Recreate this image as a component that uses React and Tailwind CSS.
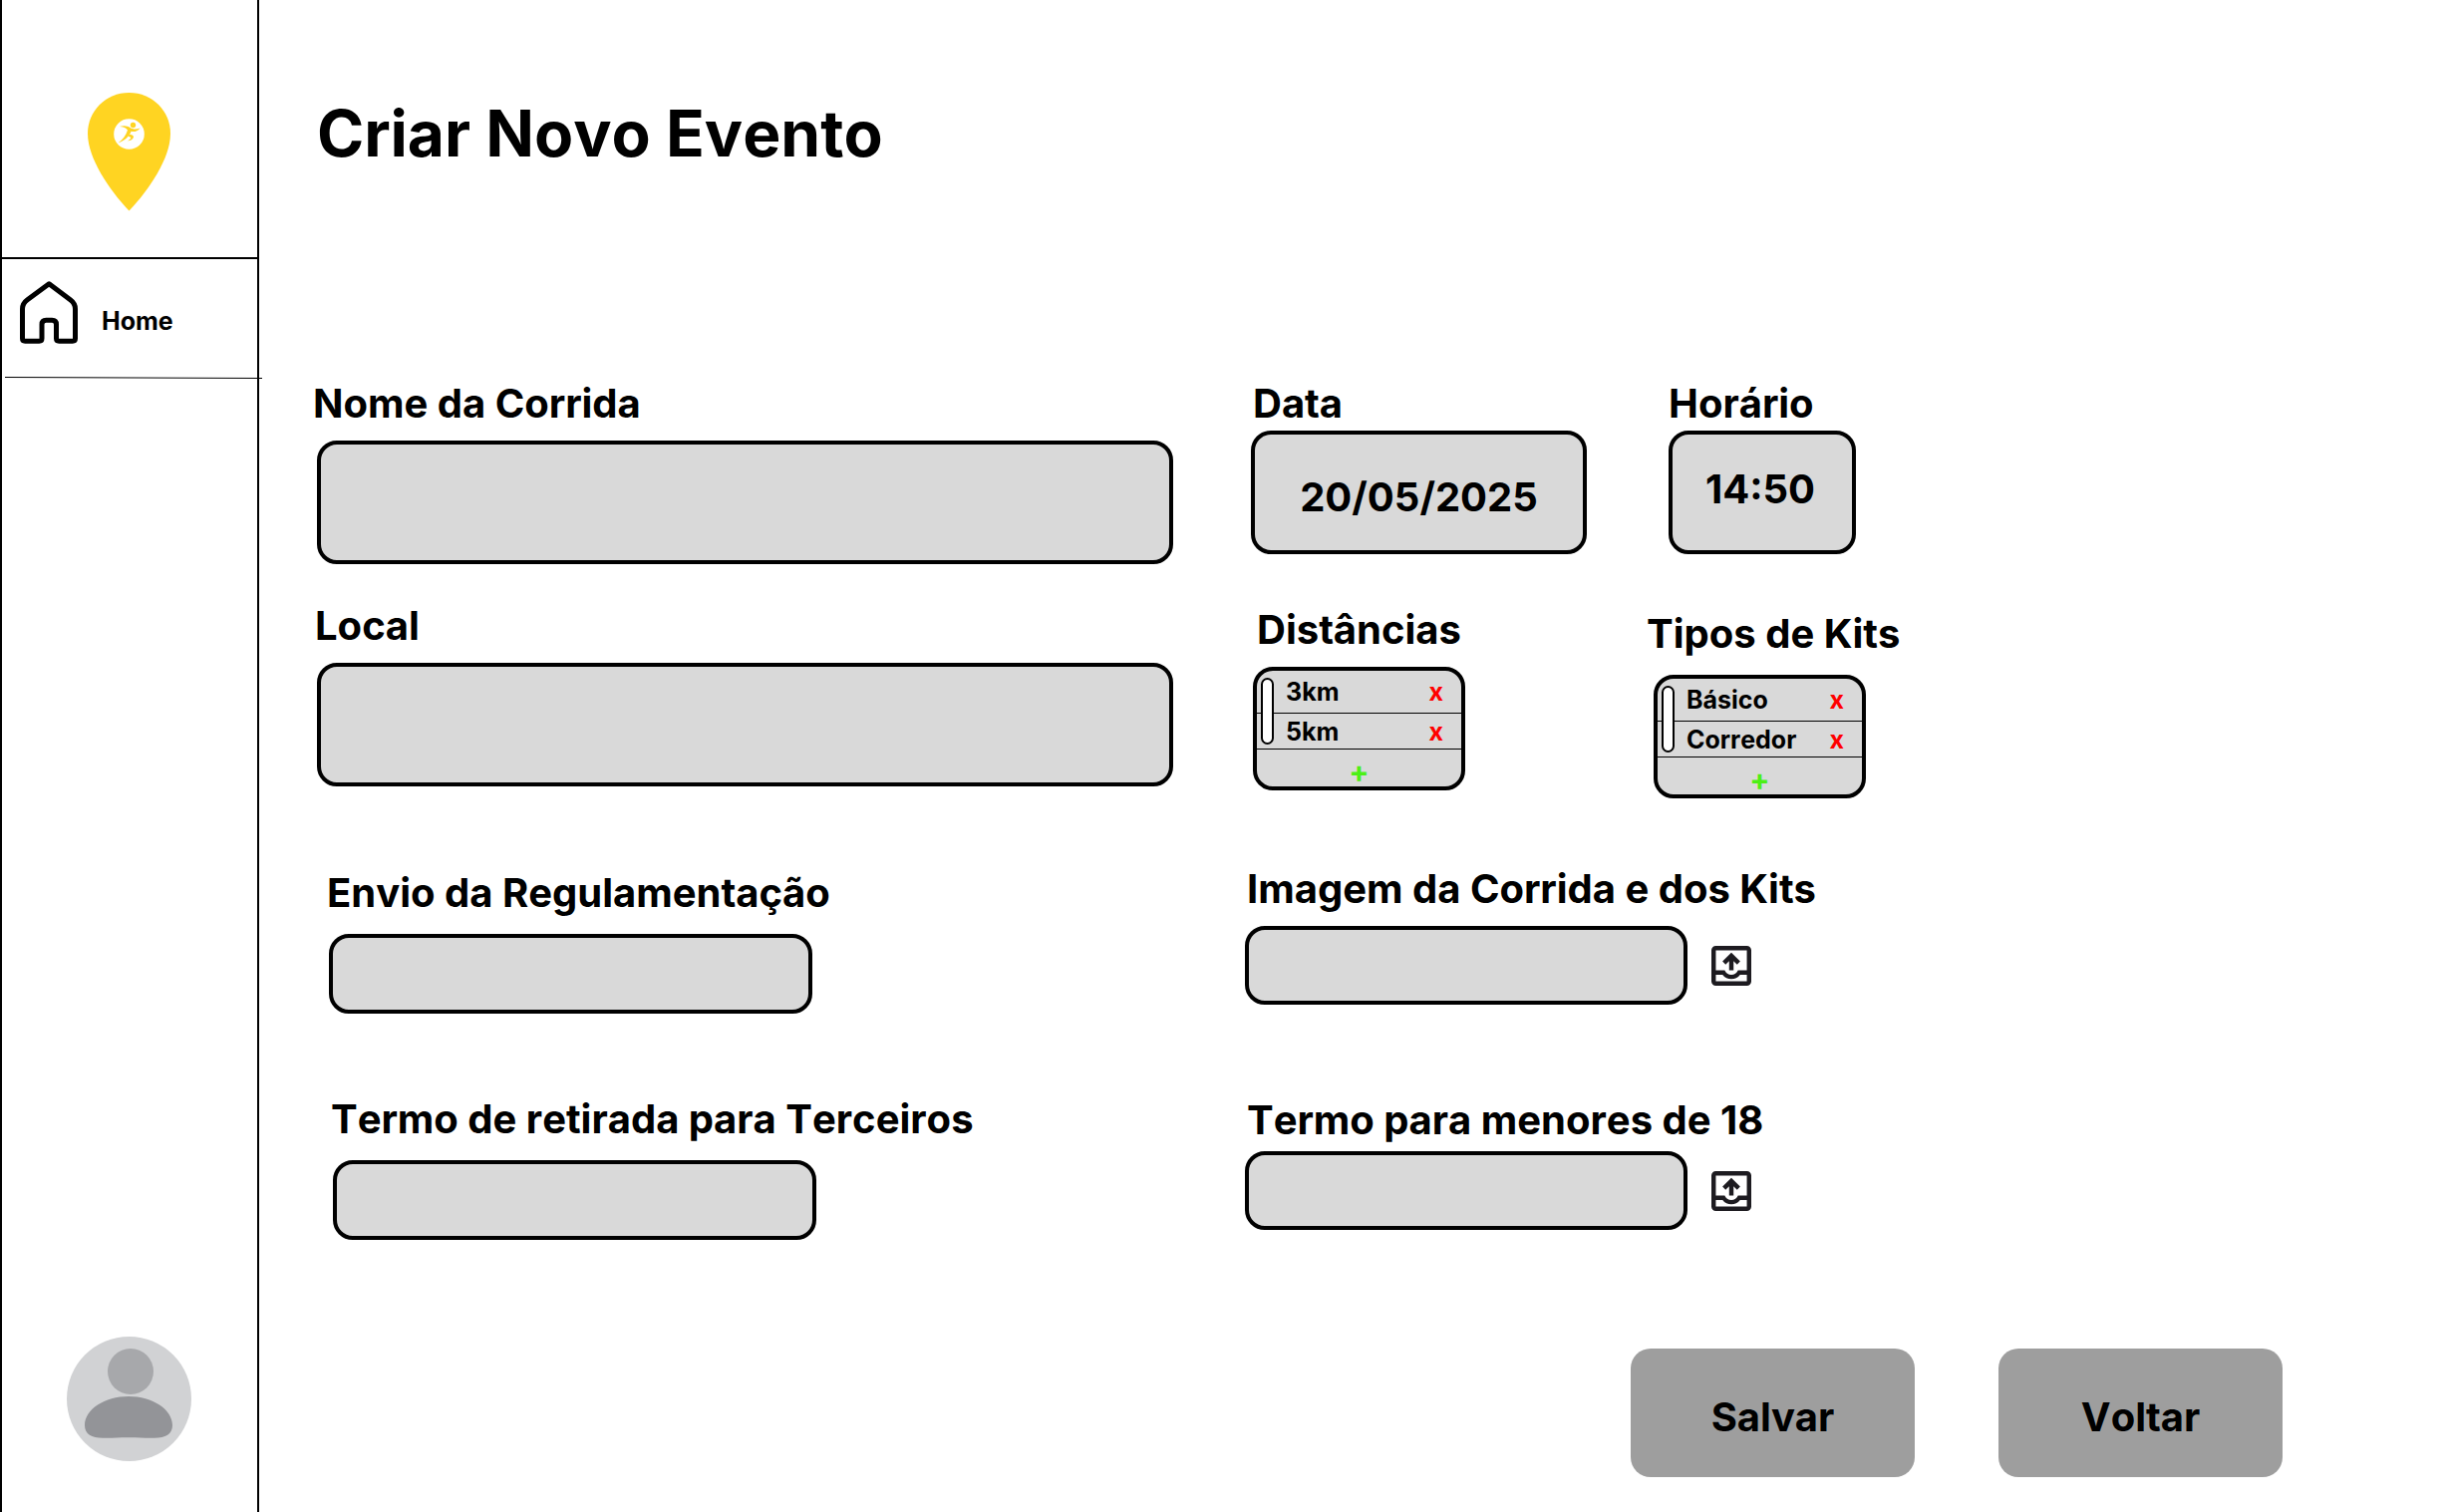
const LABEL = "block text-[40px] leading-[50px] font-bold whitespace-nowrap";
const BOX = "block border-4 border-black bg-[#d9d9d9] rounded-[20px]";

function Pin() {
  return (
    <svg viewBox="0 0 84 119" className="w-[84px] h-[119px]" aria-label="Logo" role="img">
      <path
        d="M41.500 0C18 0 0 18.500 0 41C0 66 22 98 41.500 118.500C61 98 83 66 83 41C83 18.500 65 0 41.500 0Z"
        fill="#ffd422"
      />
      <circle cx="41.500" cy="41.500" r="15.300" fill="#fff" />
      <g fill="#ffd422">
        <circle cx="45.500" cy="32.500" r="2.700" />
        <path d="M32 34C36 32.500 40 33.200 42.500 35C45 36.800 49 37 52.500 35.500C50 39 46.500 39.500 43.500 38.800C42.500 43 37 48.500 30.500 50.500C35 47 38.500 43 40 37.500C38 34.500 35 34 32 34Z" />
        <path d="M40.500 42.500C43 41 46 42.500 46 44.500C45.500 47 42.500 48.500 40 48.300C42 47 43.500 46 43.300 45C42.500 44.300 41 44.500 40.500 42.500Z" />
      </g>
    </svg>
  );
}

function HomeIcon() {
  return (
    <svg viewBox="0 0 58 63" className="w-[58px] h-[63px]" fill="none" stroke="#000" strokeWidth="5" aria-hidden="true">
      <path
        d="M29.200 2.800L50.500 18.800Q55.500 22.500 55.500 28V57.500Q55.500 60.200 52.800 60.200H39.200Q36.500 60.200 36.500 57.500V43.500Q36.500 39.200 32.200 39.200H26.300Q22 39.200 22 43.500V57.500Q22 60.200 19.300 60.200H5.200Q2.500 60.200 2.500 57.500V28Q2.500 22.500 7.500 18.800Z"
        strokeLinejoin="round"
      />
    </svg>
  );
}

function Avatar() {
  return (
    <svg viewBox="0 0 125 125" className="w-[125px] h-[125px]" role="img" aria-label="Perfil">
      <circle cx="62.500" cy="62.500" r="62.500" fill="#d1d2d4" />
      <circle cx="64" cy="35" r="23" fill="#a7a8ab" />
      <path
        d="M62 60C86 60 106 73 106 89C106 98 99 101.500 88 101.700C79 102 71 101.200 62 101.300C53 101.200 45 102 36 101.700C25 101.500 18 98 18 89C18 73 38 60 62 60Z"
        fill="#939498"
      />
    </svg>
  );
}

function UploadIcon() {
  return (
    <svg viewBox="3 3 18 18" className="w-10 h-10" fill="#1d1b20" aria-hidden="true">
      <path
        fillRule="evenodd"
        d="M5 3H19A2 2 0 0 1 21 5V19A2 2 0 0 1 19 21H5A2 2 0 0 1 3 19V5A2 2 0 0 1 5 3ZM5 16V19H19V16H15.950Q15.200 17 14.200 17.500T12 18T9.800 17.500T8.050 16ZM5 14H9Q9.300 14.900 10.150 15.450T12 16T13.850 15.450T15 14H19V5H5Z"
      />
      <path d="M11 14V9.850L9.400 11.400L8 10L12 6L16 10L14.600 11.400L13 9.850V14Z" />
    </svg>
  );
}

function Field({ id, label, className, labelGap, boxClass, ...rest }) {
  return (
    <div className={className}>
      <label htmlFor={id} className={`${LABEL} ${labelGap}`}>{label}</label>
      <input id={id} type="text" className={`${BOX} ${boxClass}`} {...rest} />
    </div>
  );
}

function UploadField({ id, label, labelGap }) {
  return (
    <div>
      <label htmlFor={id} className={`${LABEL} pl-0.5 ${labelGap}`}>{label}</label>
      <div className="flex items-center gap-6">
        <input id={id} type="text" className={`${BOX} h-[79px] w-[444px]`} />
        <button type="button" aria-label={`Enviar: ${label}`}><UploadIcon /></button>
      </div>
    </div>
  );
}

function ListBox({ label, items, className, labelClass, boxClass }) {
  return (
    <div className={className}>
      <h2 className={`${LABEL} ${labelClass}`}>{label}</h2>
      <div className={`${BOX} relative flex h-[124px] w-[213px] flex-col overflow-hidden text-[25px] leading-[30px] font-bold ${boxClass}`}>
        <ul>
          {items.map((item) => (
            <li key={item} className="flex h-9 items-center justify-between border-b border-black pr-[18px] pl-[29px] first:h-[43px]">
              <span>{item}</span>
              <button type="button" aria-label={`Remover ${item}`} className="text-[#ff0000]">x</button>
            </li>
          ))}
        </ul>
        <button type="button" aria-label={`Adicionar em ${label}`} className="flex-1 pt-1.5 text-[30px] text-[#4cf016]">+</button>
        <span className="absolute top-[7px] left-1 h-[67px] w-[13px] rounded-full border-2 border-black bg-white" />
      </div>
    </div>
  );
}

const ACTION = "h-[129px] w-[285px] rounded-[20px] bg-[#9e9e9e] pt-2 text-[40px] leading-[48px] font-bold";

export default function App() {
  return (
    <div className="flex min-h-screen bg-white font-['Inter',sans-serif] text-black [font-kerning:none]">
      <aside className="flex w-[260px] shrink-0 flex-col border-x-2 border-black">
        <div className="flex h-[260px] w-full justify-center border-b-2 border-black pt-[93px]">
          <Pin />
        </div>
        <nav className="relative h-[120px] w-full">
          <a href="#home" className="flex items-center gap-6 pt-[22px] pl-[18px] text-[25px] leading-[30px] font-bold">
            <HomeIcon />
            <span className="pt-4">Home</span>
          </a>
          <svg viewBox="0 0 258 3" className="absolute bottom-0 left-[3px] h-[3px] w-[258px]" aria-hidden="true">
            <line x1="0" y1="1.500" x2="258" y2="2.500" stroke="#000" />
          </svg>
        </nav>
        <div className="mt-auto mb-[51px] pl-[65px]">
          <Avatar />
        </div>
      </aside>

      <main className="flex-1 pt-24 pr-[167px] pb-[35px] pl-[54px]">
        <h1 className="pl-1 text-[64px] leading-[76px] font-bold">Criar Novo Evento</h1>

        <form className="mt-52">
          <div className="grid grid-cols-[935fr_1041fr]">
            <div className="flex flex-col">
              <Field id="nome" label="Nome da Corrida" className="pr-[72px] pl-1" labelGap="-ml-1 mb-3" boxClass="h-[124px] w-full" />
              <Field id="local" label="Local" className="mt-[37px] pr-[72px] pl-1" labelGap="-ml-0.5 mb-3" boxClass="h-[124px] w-full" />
              <Field id="regulamentacao" label="Envio da Regulamentação" className="mt-[82px] pl-4" labelGap="-ml-0.5 mb-4" boxClass="h-20 w-[485px]" />
              <Field id="terceiros" label="Termo de retirada para Terceiros" className="mt-[81px] pl-5" labelGap="-ml-0.5 mb-4" boxClass="h-20 w-[485px]" />
            </div>

            <div className="flex flex-col">
              <div className="flex gap-[82px] pl-1.5">
                <Field id="data" label="Data" labelGap="pl-0.5 mb-0.5" boxClass="h-[124px] w-[337px] pt-2 text-center text-[40px] leading-[48px] font-bold" defaultValue="20/05/2025" />
                <Field id="horario" label="Horário" labelGap="mb-0.5" boxClass="h-[124px] w-[188px] pr-1 pb-2 text-center text-[40px] leading-[48px] font-bold" defaultValue="14:50" />
              </div>
              <div className="mt-[51px] flex gap-[182px] pl-2">
                <ListBox label="Distâncias" items={["3km", "5km"]} labelClass="pl-1 mb-3" boxClass="" />
                <ListBox label="Tipos de Kits" items={["Básico", "Corredor"]} className="pt-1" labelClass="mb-4" boxClass="ml-[7px]" />
              </div>
              <div className="mt-[66px] flex flex-col gap-[91px]">
                <UploadField id="imagem" label="Imagem da Corrida e dos Kits" labelGap="mb-3" />
                <UploadField id="menores" label="Termo para menores de 18" labelGap="mb-1.5" />
              </div>
            </div>
          </div>

          <div className="mt-[109px] flex justify-end gap-[84px]">
            <button type="submit" className={ACTION}>Salvar</button>
            <button type="button" className={ACTION}>Voltar</button>
          </div>
        </form>
      </main>
    </div>
  );
}
